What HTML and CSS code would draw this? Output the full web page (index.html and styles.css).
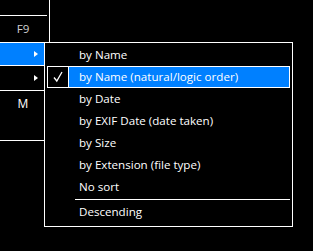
FILE: index.html
```html
<!DOCTYPE html>
<html lang="en">

<head>
    <meta charset="UTF-8">
    <title>Sort menu</title>
    <link rel="stylesheet" href="styles.css">
</head>

<body>
    <!-- parent menu (right edge only visible) -->
    <div class="parent">
        <div class="parent-top">
            <div class="blank"></div>
            <div class="shortcut">F9</div>
        </div>
        <div class="sub active"><span class="arrow"></span></div>
        <div class="sub"><span class="arrow"></span></div>
        <div class="sub tall"><span class="shortcut-m">M</span></div>
    </div>

    <!-- sort submenu -->
    <div class="popup">
        <div class="mi"><span class="check"></span><span class="label">by Name</span></div>
        <div class="mi selected">
            <span class="check">
                <svg width="20" height="20" viewBox="0 0 20 20">
                    <path d="M6 10.5 L8.8 14 L14 5" fill="none" stroke="#fff" stroke-width="1.3" />
                </svg>
            </span>
            <span class="label">by Name (natural/logic order)</span>
        </div>
        <div class="mi"><span class="check"></span><span class="label">by Date</span></div>
        <div class="mi"><span class="check"></span><span class="label">by EXIF Date (date taken)</span></div>
        <div class="mi"><span class="check"></span><span class="label">by Size</span></div>
        <div class="mi"><span class="check"></span><span class="label">by Extension (file type)</span></div>
        <div class="mi"><span class="check"></span><span class="label">No sort</span></div>
        <div class="sep"></div>
        <div class="mi"><span class="check"></span><span class="label">Descending</span></div>
    </div>
</body>

</html>
```

FILE: styles.css
```css
* {
    margin: 0;
    padding: 0;
    box-sizing: border-box;
    font-family: 'Open Sans', 'Noto Sans', sans-serif;
}

body {
    background-color: #000;
    color: #fff;
    width: 313px;
    height: 251px;
    overflow: hidden;
    position: relative;
    font-size: 11.6px;
}

/* parent menu */
.parent {
    width: 60px;
}

.parent-top {
    width: 50px;
    height: 42px;
    border-right: 1px solid #fff;
}

.blank {
    width: 47px;
    height: 16px;
    border-bottom: 1px solid #fff;
}

.shortcut {
    width: 46px;
    height: 26px;
    line-height: 26px;
    text-align: center;
    color: #d0d0d0;
}

.sub {
    height: 24px;
    border-top: 1px solid #fff;
    display: flex;
    align-items: center;
}

.sub.active {
    background-color: #0080ff;
    border-bottom: 1px solid #fff;
}

.sub.active + .sub {
    border-top: none;
}

.sub.tall {
    height: 51px;
    border-bottom: 1px solid #fff;
    align-items: flex-start;
}

.arrow {
    margin-left: 34px;
    width: 0;
    height: 0;
    border-left: 4px solid #fff;
    border-top: 3.5px solid transparent;
    border-bottom: 3.5px solid transparent;
}

.shortcut-m {
    width: 46px;
    text-align: center;
    line-height: 24px;
    padding-top: 1px;
    font-size: 12px;
}

/* submenu */
.popup {
    position: absolute;
    left: 44px;
    top: 42px;
    width: 249px;
    height: 185px;
    background-color: #000;
    border: 1px solid #fff;
    padding: 1px 2px 2px 2px;
}

.mi {
    height: 22px;
    display: flex;
    align-items: stretch;
    border: 1px solid transparent;
}

.check {
    width: 21px;
    border-right: 1px solid transparent;
    display: flex;
    align-items: center;
    justify-content: center;
}

.label {
    flex-grow: 1;
    padding-left: 10px;
    line-height: 20px;
    white-space: nowrap;
}

.mi.selected {
    border-color: #fff;
}

.mi.selected .check {
    border-right-color: #fff;
}

.mi.selected .label {
    background-color: #0080ff;
}

.sep {
    margin-left: 28px;
    border-top: 1px solid #fff;
    margin-top: 1px;
    height: 2px;
}
```
